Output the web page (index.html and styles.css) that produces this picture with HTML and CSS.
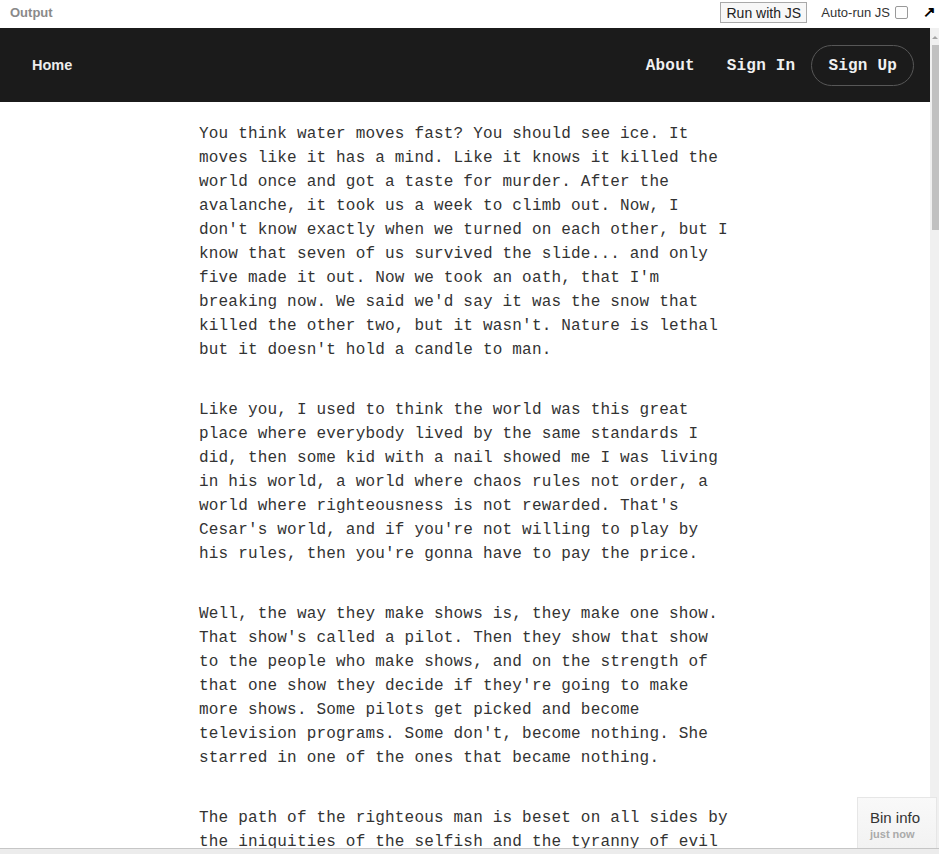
FILE: index.html
```html
<!DOCTYPE html>
<html>
<head>
<meta charset="utf-8">
<link rel="stylesheet" href="styles.css">
</head>
<body>
<div class="topbar">
  <span class="output-label">Output</span>
  <div class="controls">
    <button class="run-btn">Run with JS</button>
    <label class="autorun">Auto-run JS <span class="checkbox"></span></label>
    <span class="popout">&#x2197;</span>
  </div>
</div>
<div class="frame">
  <div class="viewport">
    <nav class="nav">
      <a class="home">Home</a>
      <div class="nav-right">
        <a class="nav-link">About</a>
        <a class="nav-link">Sign In</a>
        <a class="nav-pill">Sign Up</a>
      </div>
    </nav>
    <main class="content">
      <p>You think water moves fast? You should see ice. It moves like it has a mind. Like it knows it killed the world once and got a taste for murder. After the avalanche, it took us a week to climb out. Now, I don't know exactly when we turned on each other, but I know that seven of us survived the slide... and only five made it out. Now we took an oath, that I'm breaking now. We said we'd say it was the snow that killed the other two, but it wasn't. Nature is lethal but it doesn't hold a candle to man.</p>
      <p>Like you, I used to think the world was this great place where everybody lived by the same standards I did, then some kid with a nail showed me I was living in his world, a world where chaos rules not order, a world where righteousness is not rewarded. That's Cesar's world, and if you're not willing to play by his rules, then you're gonna have to pay the price.</p>
      <p>Well, the way they make shows is, they make one show. That show's called a pilot. Then they show that show to the people who make shows, and on the strength of that one show they decide if they're going to make more shows. Some pilots get picked and become television programs. Some don't, become nothing. She starred in one of the ones that became nothing.</p>
      <p>The path of the righteous man is beset on all sides by the iniquities of the selfish and the tyranny of evil men. Blessed is he who, in the name of charity and good will, shepherds the weak through the valley of darkness.</p>
    </main>
  </div>
  <div class="vscroll">
    <div class="vscroll-arrow"></div>
    <div class="vscroll-thumb"></div>
  </div>
  <div class="bininfo">
    <div class="bininfo-title">Bin info</div>
    <div class="bininfo-time">just now</div>
  </div>
</div>
<div class="hscroll"></div>
</body>
</html>
```

FILE: styles.css
```css
html, body {
  margin: 0;
  padding: 0;
  background: #fff;
  height: 854px;
  overflow: hidden;
}

.topbar {
  height: 28px;
  display: flex;
  align-items: center;
  justify-content: space-between;
  padding: 0 3px 0 10px;
  font-family: "Liberation Sans", Arial, sans-serif;
  background: #fff;
}

.output-label {
  font-size: 13px;
  font-weight: bold;
  color: #8a8a8a;
  margin-top: -3px;
}

.controls {
  display: flex;
  align-items: center;
}

.run-btn {
  font-family: "Liberation Sans", Arial, sans-serif;
  font-size: 14px;
  color: #222;
  background: #f7f7f7;
  border: 1px solid #a9a9a9;
  height: 21px;
  width: 87px;
  padding: 0;
  margin-top: -3px;
}

.autorun {
  display: flex;
  align-items: center;
  font-size: 13px;
  color: #333;
  margin-left: 14px;
  margin-top: -3px;
}

.checkbox {
  display: inline-block;
  width: 11px;
  height: 11px;
  border: 1px solid #999;
  border-radius: 2px;
  background: #fdfdfd;
  margin-left: 5px;
}

.popout {
  font-size: 15px;
  font-weight: bold;
  color: #000;
  margin-left: 15px;
  margin-top: -4px;
}

.frame {
  position: relative;
  display: flex;
  height: 820px;
}

.viewport {
  flex: 1;
  overflow: hidden;
}

.nav {
  height: 74px;
  background: #1b1b1b;
  display: flex;
  align-items: center;
  justify-content: space-between;
  padding: 0 16px 0 32px;
  color: #fff;
}

.home {
  font-family: "Liberation Sans", Arial, sans-serif;
  font-size: 14.5px;
  font-weight: bold;
  color: #ececec;
  margin-top: 0;
}

.nav-right {
  display: flex;
  align-items: center;
}

.nav-link, .nav-pill {
  font-family: "Liberation Mono", "DejaVu Sans Mono", monospace;
  font-size: 16px;
  font-weight: bold;
  letter-spacing: 0.2px;
  color: #f0f0f0;
  line-height: 23px;
}

.nav-link {
  padding: 0 16px;
  margin-top: 2px;
}

.nav-pill {
  padding: 9px 16px 7px;
  border: 1px solid #575757;
  border-radius: 21px;
  margin-top: 0;
}

.content {
  width: 532px;
  margin: 0 auto;
  padding-top: 20px;
  font-family: "Liberation Mono", "DejaVu Sans Mono", monospace;
  font-size: 16px;
  letter-spacing: 0.19px;
  line-height: 24px;
  color: #333;
}

.content p {
  margin: 0 0 36px;
}

.vscroll {
  width: 9px;
  background: #f0f0f0;
  display: flex;
  flex-direction: column;
  align-items: flex-end;
}

.vscroll-arrow {
  width: 0;
  height: 0;
  margin: 8px 1px 0 0;
  border-left: 3px solid transparent;
  border-right: 3px solid transparent;
  border-bottom: 3px solid #a3a3a3;
}

.vscroll-thumb {
  width: 7px;
  height: 185px;
  margin-top: 6px;
  background: #c1c1c1;
}

.bininfo {
  position: absolute;
  right: 2px;
  bottom: 0;
  width: 66px;
  height: 50px;
  padding: 0 0 0 12px;
  background: linear-gradient(#f9f9f9, #f2f2f2);
  border: 1px solid #e6e6e6;
  border-bottom: none;
  font-family: "Liberation Sans", Arial, sans-serif;
}

.bininfo-title {
  font-size: 15px;
  color: #333;
  margin-top: 11px;
  line-height: 17px;
}

.bininfo-time {
  font-size: 11px;
  font-weight: bold;
  color: #aaa;
  line-height: 13px;
  margin-top: 2px;
}

.hscroll {
  height: 5px;
  background: #ececec;
  border-top: 1px solid #c6c6c6;
}
```
